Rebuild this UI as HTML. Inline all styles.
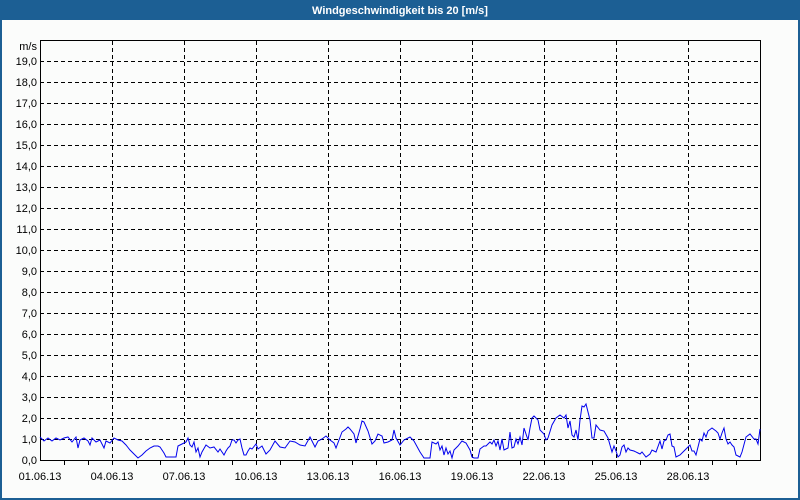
<!DOCTYPE html>
<html><head><meta charset="utf-8"><style>
html,body{margin:0;padding:0;width:800px;height:500px;overflow:hidden;background:#fbfcfb}
svg{display:block}
text{font-family:"Liberation Sans",sans-serif;font-size:11px;fill:#000}
</style></head><body>
<svg width="800" height="500" viewBox="0 0 800 500" xmlns="http://www.w3.org/2000/svg">
<rect x="0" y="0" width="800" height="500" fill="#fbfcfb"/>
<rect x="0" y="0" width="800" height="20" fill="#1c5f94"/>
<rect x="0" y="20" width="2" height="480" fill="#1c5f94"/>
<rect x="798" y="20" width="2" height="480" fill="#1c5f94"/>
<rect x="0" y="498" width="800" height="2" fill="#1c5f94"/>
<text x="400" y="14" text-anchor="middle" style="font-weight:bold;fill:#fff;font-size:11px">Windgeschwindigkeit bis 20 [m/s]</text>
<g id="grid" stroke="#000" stroke-width="1" stroke-dasharray="4,3" fill="none"></g>
<g id="ylab"></g>
<g id="xlab"></g>
<rect x="40.5" y="40.5" width="720" height="420" fill="none" stroke="#000" stroke-width="1"/>
<text x="37" y="50" text-anchor="end">m/s</text>
<polyline id="data" fill="none" stroke="#0000ee" stroke-width="1" points=""/>
</svg>
<script>
var ns="http://www.w3.org/2000/svg",svg=document.querySelector('svg');
var g=document.getElementById('grid'),yl=document.getElementById('ylab'),xl=document.getElementById('xlab');
for(var i=1;i<=19;i++){var y=460-21*i+0.5;var l=document.createElementNS(ns,'line');l.setAttribute('x1',40);l.setAttribute('x2',760);l.setAttribute('y1',y);l.setAttribute('y2',y);g.appendChild(l);}
for(var i=0;i<=19;i++){var t=document.createElementNS(ns,'text');t.setAttribute('x',37);t.setAttribute('y',460-21*i+4);t.setAttribute('text-anchor','end');t.textContent=i+',0';yl.appendChild(t);}
for(var k=1;k<10;k++){var x=40+72*k+0.5;var l=document.createElementNS(ns,'line');l.setAttribute('x1',x);l.setAttribute('x2',x);l.setAttribute('y1',41);l.setAttribute('y2',460);g.appendChild(l);}
for(var k=1;k<30;k++){var x=40+24*k+0.5;var l=document.createElementNS(ns,'line');l.setAttribute('x1',x);l.setAttribute('x2',x);l.setAttribute('y1',461);l.setAttribute('y2',465);l.setAttribute('stroke','#000');svg.appendChild(l);}
var dates=['01.06.13','04.06.13','07.06.13','10.06.13','13.06.13','16.06.13','19.06.13','22.06.13','25.06.13','28.06.13'];
for(var k=0;k<10;k++){var t=document.createElementNS(ns,'text');t.setAttribute('x',40+72*k);t.setAttribute('y',480);t.setAttribute('text-anchor','middle');t.textContent=dates[k];xl.appendChild(t);}
document.getElementById('data').setAttribute('points',"40,437 44,441 48,438 52,441 56,438 60,440 64,438 68,437 72,442 76,437 78,448 80,440 84,438 88,441 90,445 92,438 96,442 100,440 104,448 106,441 110,443 114,438 118,440 122,441 126,445 130,450 134,454 138,458 142,455 146,451 150,448 154,446 158,446 160,447 164,453 166,457 170,457 176,457 178,446 182,444 186,442 188,438 190,445 192,447 194,442 196,452 198,448 200,457 202,452 206,445 210,448 214,447 218,452 220,449 224,455 226,451 228,448 230,446 232,440 234,440 236,443 238,440 240,439 242,448 244,455 246,455 248,451 250,448 252,449 256,444 258,449 262,446 266,454 270,450 275,441 280,447 285,448 290,441 295,442 300,445 305,446 310,437 315,447 318,441 322,439 326,436 330,440 334,443 336,448 339,440 342,432 346,429 348,427 350,429 354,434 356,443 360,429 362,421 364,422 368,431 372,444 375,441 378,434 382,436 384,443 388,442 392,440 394,430 396,438 400,445 404,440 410,437 414,441 420,452 424,458 430,458 432,442 436,444 438,442 440,450 442,446 444,455 446,448 448,454 450,451 452,458 454,450 458,446 462,441 466,443 470,450 472,457 474,458 478,458 480,449 484,446 486,446 490,442 492,444 494,440 496,446 498,441 500,450 502,439 504,450 508,448 510,432 512,448 514,447 516,439 518,444 520,437 522,445 524,428 526,434 528,440 530,428 532,418 534,416 538,420 540,430 544,434 546,440 548,438 552,425 556,418 560,415 564,418 566,415 568,428 570,421 572,435 574,437 576,430 578,440 580,420 582,406 584,407 586,404 588,412 590,420 592,438 594,438 596,425 600,430 604,431 608,438 612,452 614,446 616,451 618,457 620,455 622,447 624,445 626,452 628,448 630,450 634,451 638,453 640,454 642,452 646,457 650,454 652,450 656,452 660,441 662,449 664,441 666,440 668,435 670,434 672,446 674,447 676,457 680,455 684,451 688,447 690,445 692,451 694,451 696,455 698,447 700,439 702,441 704,433 706,437 708,431 712,428 716,431 718,433 720,439 722,433 724,428 726,439 728,444 730,442 732,445 734,447 736,455 740,457 742,452 746,437 750,434 754,439 756,439 758,444 760,429");
</script>
</body></html>
